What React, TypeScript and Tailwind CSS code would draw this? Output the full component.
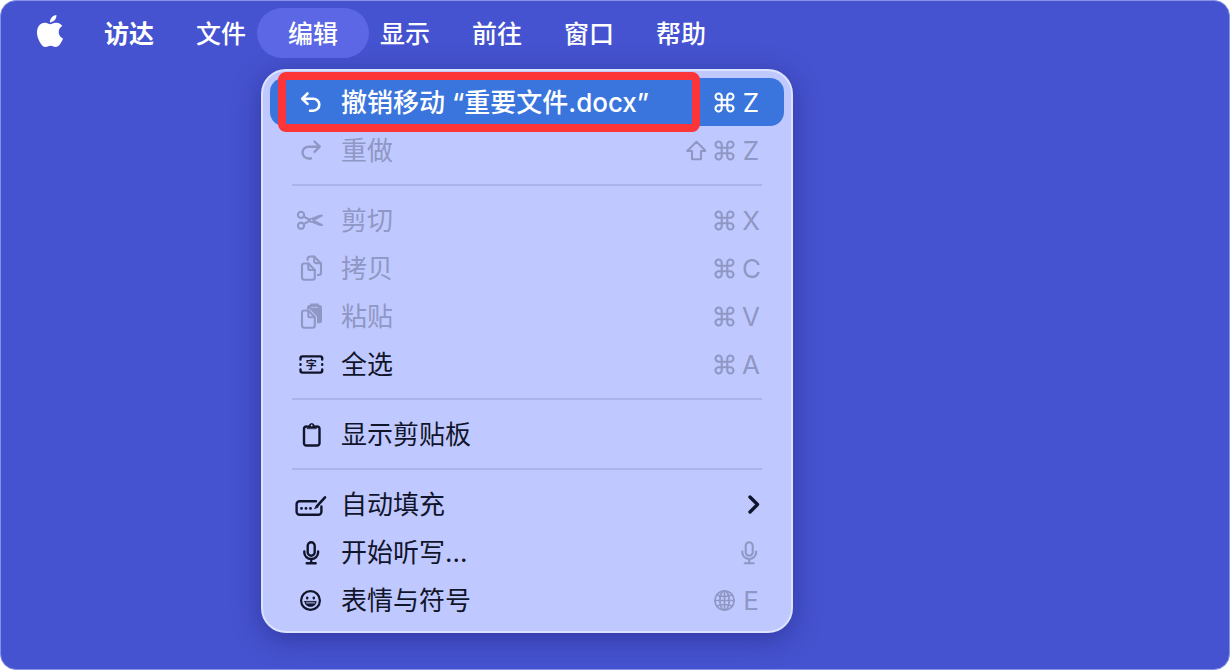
import { clsx } from "clsx";
import React from "react";
import { SiApple } from "react-icons/si";

type IconProps = { children: React.ReactNode; strokeWidth?: number };

const Glyph = ({ children, strokeWidth = 2.4 }: IconProps) => (
  <svg
    viewBox="0 0 32 32"
    className="size-8 shrink-0"
    fill="none"
    stroke="currentColor"
    strokeWidth={strokeWidth}
    strokeLinecap="round"
    strokeLinejoin="round"
    aria-hidden="true"
  >
    {children}
  </svg>
);

const KeyGlyph = ({ children, strokeWidth = 2.1 }: IconProps) => (
  <svg
    viewBox="0 0 24 24"
    className="size-6 shrink-0"
    fill="none"
    stroke="currentColor"
    strokeWidth={strokeWidth}
    strokeLinecap="round"
    strokeLinejoin="round"
    aria-hidden="true"
  >
    {children}
  </svg>
);

const UndoIcon = () => (
  <Glyph strokeWidth={2.6}>
    <path d="M12.5 7.500 7.200 12.700l5.300 5.200M7.500 12.700h10.800a6 6 0 0 1 0 12H15" />
  </Glyph>
);

const RedoIcon = () => (
  <Glyph strokeWidth={2.4}>
    <path d="M19.500 7.500l5.300 5.200-5.300 5.200M24.500 12.700H13.400a5.900 5.900 0 0 0 0 11.800H16" />
  </Glyph>
);

const ScissorsIcon = () => (
  <Glyph strokeWidth={2.1}>
    <circle cx="6" cy="10.900" r="3.100" />
    <circle cx="6" cy="21.700" r="3.100" />
    <path d="M8.800 12.600 15 16M8.800 20 15 16.600" />
    <path
      d="M13.500 15.600l11-4.300q2-.700 3.400.300L15.500 18.200zM13.500 17l11 4.300q2 .700 3.400-.300L15.500 14.400z"
      fill="currentColor"
      strokeWidth="1"
    />
  </Glyph>
);

const CopyIcon = () => (
  <Glyph strokeWidth={2.1}>
    <path d="M9.200 11.500h4.300l6.300 6.600v7.400a2.200 2.200 0 0 1-2.200 2.200H9.200A2.200 2.200 0 0 1 7 25.500V13.700a2.200 2.200 0 0 1 2.200-2.200z" />
    <path d="M13.300 11.500v5a1.500 1.500 0 0 0 1.500 1.500h5" />
    <path d="M12.600 8V6.700a2.200 2.200 0 0 1 2.200-2.200h4.400l6.800 7v9.300a2.200 2.200 0 0 1-2.200 2.200h-1" />
    <path d="M19.200 4.500v5a1.600 1.600 0 0 0 1.600 1.600h5" />
  </Glyph>
);

const PasteIcon = () => (
  <Glyph strokeWidth={2.1}>
    <path
      d="M12 7.500A2.500 2.500 0 0 1 14.500 5h10A2.500 2.500 0 0 1 27 7.500v13.200a2.500 2.500 0 0 1-2.500 2.500H22v-6.400L14.800 9H12z"
      fill="currentColor"
      stroke="none"
    />
    <path d="M16 4.600h7" />
    <path d="M16.500 7.400h6" className="stroke-[#c0c9ff]" strokeWidth="0.8" />
    <path d="M9.200 10.500h4.300l6.300 6.800v8.200a2.200 2.200 0 0 1-2.200 2.200H9.200A2.200 2.200 0 0 1 7 25.500V12.700a2.200 2.200 0 0 1 2.200-2.200z" />
    <path d="M13.300 10.500v5.200a1.500 1.500 0 0 0 1.500 1.500h5" />
  </Glyph>
);

const SelectAllIcon = () => (
  <Glyph>
    <path d="M5.500 11.500V10.400a2 2 0 0 1 2-2h17.700a2 2 0 0 1 2 2v1.100M5.500 21.500v1.100a2 2 0 0 0 2 2h17.700a2 2 0 0 0 2-2v-1.100M5.500 16.200v.600M27.200 16.200v.600" />
    <text
      x="16.300"
      y="20.600"
      textAnchor="middle"
      fontSize="11"
      fontWeight="700"
      fill="currentColor"
      stroke="none"
    >
      字
    </text>
  </Glyph>
);

const ClipboardIcon = () => (
  <Glyph>
    <path d="M11.500 8.500h-.300A2.200 2.200 0 0 0 9 10.700v14.600a2.200 2.200 0 0 0 2.200 2.200h11.100a2.200 2.200 0 0 0 2.200-2.200V10.700a2.200 2.200 0 0 0-2.200-2.200h-.300" />
    <path
      d="M12.200 10.300V8.700q0-1 1-1h.900a2.700 2.700 0 0 1 5.300 0h.900q1 0 1 1v1.600z"
      fill="currentColor"
      strokeWidth="0.8"
    />
    <circle cx="16.700" cy="7.500" r="0.900" className="fill-[#c0c9ff]" stroke="none" />
  </Glyph>
);

const AutofillIcon = () => (
  <Glyph>
    <path d="M21 13.200H4.600a3 3 0 0 0-3 3v7.600a3 3 0 0 0 3 3h18.800a3 3 0 0 0 3-3v-5.300" />
    <path d="M30 9.300 22 18.200" strokeWidth="2.600" />
    <path d="M21.700 17.600l1.500 1.500-3.300 1.500z" fill="currentColor" strokeWidth="0.800" />
    <path d="M6.500 20.400v0M11 20.400v0M15.500 20.400v0" strokeWidth="2.900" />
  </Glyph>
);

const micPath =
  "M16.200 6.300a3.500 3.500 0 0 1 3.500 3.500v6.400a3.500 3.500 0 0 1-7 0V9.800a3.500 3.500 0 0 1 3.500-3.500zM9.300 15.500v1a6.900 6.500 0 0 0 13.800 0v-1M16.200 23.200v4M11.700 27.300h9";

const MicIcon = () => (
  <Glyph>
    <path d={micPath} />
  </Glyph>
);

const EmojiIcon = () => (
  <Glyph strokeWidth={2.2}>
    <circle cx="15.500" cy="16.500" r="9.400" />
    <path d="M12.200 13.600v.600M18.800 13.600v.600" strokeWidth="2.400" />
    <path
      d="M9.800 17.400h11.400q-.700 5-5.700 5t-5.700-5z"
      fill="currentColor"
      strokeWidth="0.800"
    />
    <path d="M11.500 18.900h8" className="stroke-[#c0c9ff]" strokeWidth="1" />
  </Glyph>
);

const CommandKey = () => (
  <KeyGlyph>
    <path d="M9.700 9.700h5.600v5.600H9.700zM9.700 9.700H6.600a3.100 3.100 0 1 1 3.100-3.100zM15.300 9.700V6.600a3.100 3.100 0 1 1 3.100 3.100zM15.300 15.300h3.100a3.100 3.100 0 1 1-3.100 3.100zM9.700 15.300v3.100a3.100 3.100 0 1 1-3.100-3.100z" />
  </KeyGlyph>
);

const ShiftKey = () => (
  <KeyGlyph>
    <path d="M14.500 3.800 23.800 13h-4.800v8.300h-9V13H5.200z" />
  </KeyGlyph>
);

const GlobeKey = () => (
  <KeyGlyph strokeWidth={1.7}>
    <circle cx="12.500" cy="12.500" r="9.600" />
    <ellipse cx="12.500" cy="12.500" rx="4.600" ry="9.600" />
    <path d="M12.500 3v19M2.900 12.500h19.200M5 7q7.500 3 15 0M5 18q7.500-3 15 0" />
  </KeyGlyph>
);

type MenuEntry = {
  label: string;
  icon: React.ReactNode;
  keys?: React.ReactNode;
  letter?: string;
  trailing?: React.ReactNode;
  state?: "disabled" | "active";
};

const groups: MenuEntry[][] = [
  [
    {
      label: "撤销移动 “重要文件.docx”",
      icon: <UndoIcon />,
      keys: <CommandKey />,
      letter: "Z",
      state: "active",
    },
    {
      label: "重做",
      icon: <RedoIcon />,
      keys: (
        <>
          <ShiftKey />
          <CommandKey />
        </>
      ),
      letter: "Z",
      state: "disabled",
    },
  ],
  [
    { label: "剪切", icon: <ScissorsIcon />, keys: <CommandKey />, letter: "X", state: "disabled" },
    { label: "拷贝", icon: <CopyIcon />, keys: <CommandKey />, letter: "C", state: "disabled" },
    { label: "粘贴", icon: <PasteIcon />, keys: <CommandKey />, letter: "V", state: "disabled" },
    { label: "全选", icon: <SelectAllIcon />, keys: <CommandKey />, letter: "A" },
  ],
  [{ label: "显示剪贴板", icon: <ClipboardIcon /> }],
  [
    {
      label: "自动填充",
      icon: <AutofillIcon />,
      trailing: (
        <svg
          viewBox="0 0 12 24"
          className="h-6 w-3 text-[#11152b]"
          fill="none"
          stroke="currentColor"
          strokeWidth="3.4"
          strokeLinecap="round"
          strokeLinejoin="round"
          aria-hidden="true"
        >
          <path d="M2 5l7.500 7.500L2 20" />
        </svg>
      ),
    },
    {
      label: "开始听写...",
      icon: <MicIcon />,
      trailing: (
        <svg
          viewBox="5 0 22 32"
          className="h-8 w-[22px]"
          fill="none"
          stroke="currentColor"
          strokeWidth="2.1"
          strokeLinecap="round"
          aria-hidden="true"
        >
          <path d={micPath} />
        </svg>
      ),
    },
    { label: "表情与符号", icon: <EmojiIcon />, keys: <GlobeKey />, letter: "E" },
  ],
];

const menus = ["访达", "文件", "编辑", "显示", "前往", "窗口", "帮助"];

function MenuItem({ label, icon, keys, letter, trailing, state }: MenuEntry) {
  const active = state === "active";
  return (
    <li role="none" className="relative">
      <button
        type="button"
        role="menuitem"
        disabled={state === "disabled"}
        className={clsx(
          "flex h-12 w-full items-center rounded-[14px] pr-6 pl-[25px] text-left",
          active && "bg-[#3a75dd] text-white",
          state === "disabled" && "text-[#8f97c4]",
          !state && "text-[#11152b]",
        )}
      >
        {icon}
        <span className={clsx("ml-3.5 grow pt-0.5 whitespace-nowrap", active && "font-medium")}>
          {label}
        </span>
        <span className={clsx("flex items-center gap-1.5", !active && "text-[#8f97c4]")}>
          {keys}
          {letter && <kbd className="w-[18px] pt-0.5 text-center font-[inherit]">{letter}</kbd>}
          {trailing}
        </span>
      </button>
      {active && (
        <span className="pointer-events-none absolute -inset-y-1.5 right-[84px] left-2 rounded-lg border-8 border-[#fc3539]" />
      )}
    </li>
  );
}

export default function App() {
  return (
    <div className="min-h-screen rounded-2xl border border-[#8792e6] bg-[#4653d0] pt-[7px] pb-9 font-['Inter','Noto_Sans_CJK_SC',sans-serif] text-[26px] leading-8">
      <nav
        className="flex h-[50px] items-center pl-9 text-[25px] text-white"
        aria-label="菜单栏"
      >
        <button type="button" aria-label="苹果菜单" className="mr-5 mb-1">
          <SiApple className="h-8 w-[26px]" preserveAspectRatio="xMidYMid slice" />
        </button>
        {menus.map((name, i) => (
          <button
            key={name}
            type="button"
            className={clsx(
              "h-full shrink-0 pt-0.5",
              i === 0 ? "font-bold" : "font-medium",
              name === "编辑" ? "-mx-2.5 rounded-full bg-[#5b67e5] px-[31px]" : "px-[21px]",
            )}
          >
            {name}
          </button>
        ))}
      </nav>
      <main className="pt-[11px] pl-[260px]">
        <div
          role="menu"
          aria-label="编辑"
          className="w-[532px] rounded-[25px] border-2 border-[#dbe3ff] bg-[#c0c9ff] p-[7px] shadow-[0_6px_28px_rgba(20,20,90,0.4)]"
        >
          {groups.map((entries, i) => (
            <React.Fragment key={entries[0].label}>
              {i > 0 && <hr className="mx-[22px] my-2.5 border-t-2 border-[#abb4eb]" />}
              <ul role="none">
                {entries.map((entry) => (
                  <MenuItem key={entry.label} {...entry} />
                ))}
              </ul>
            </React.Fragment>
          ))}
        </div>
      </main>
    </div>
  );
}
